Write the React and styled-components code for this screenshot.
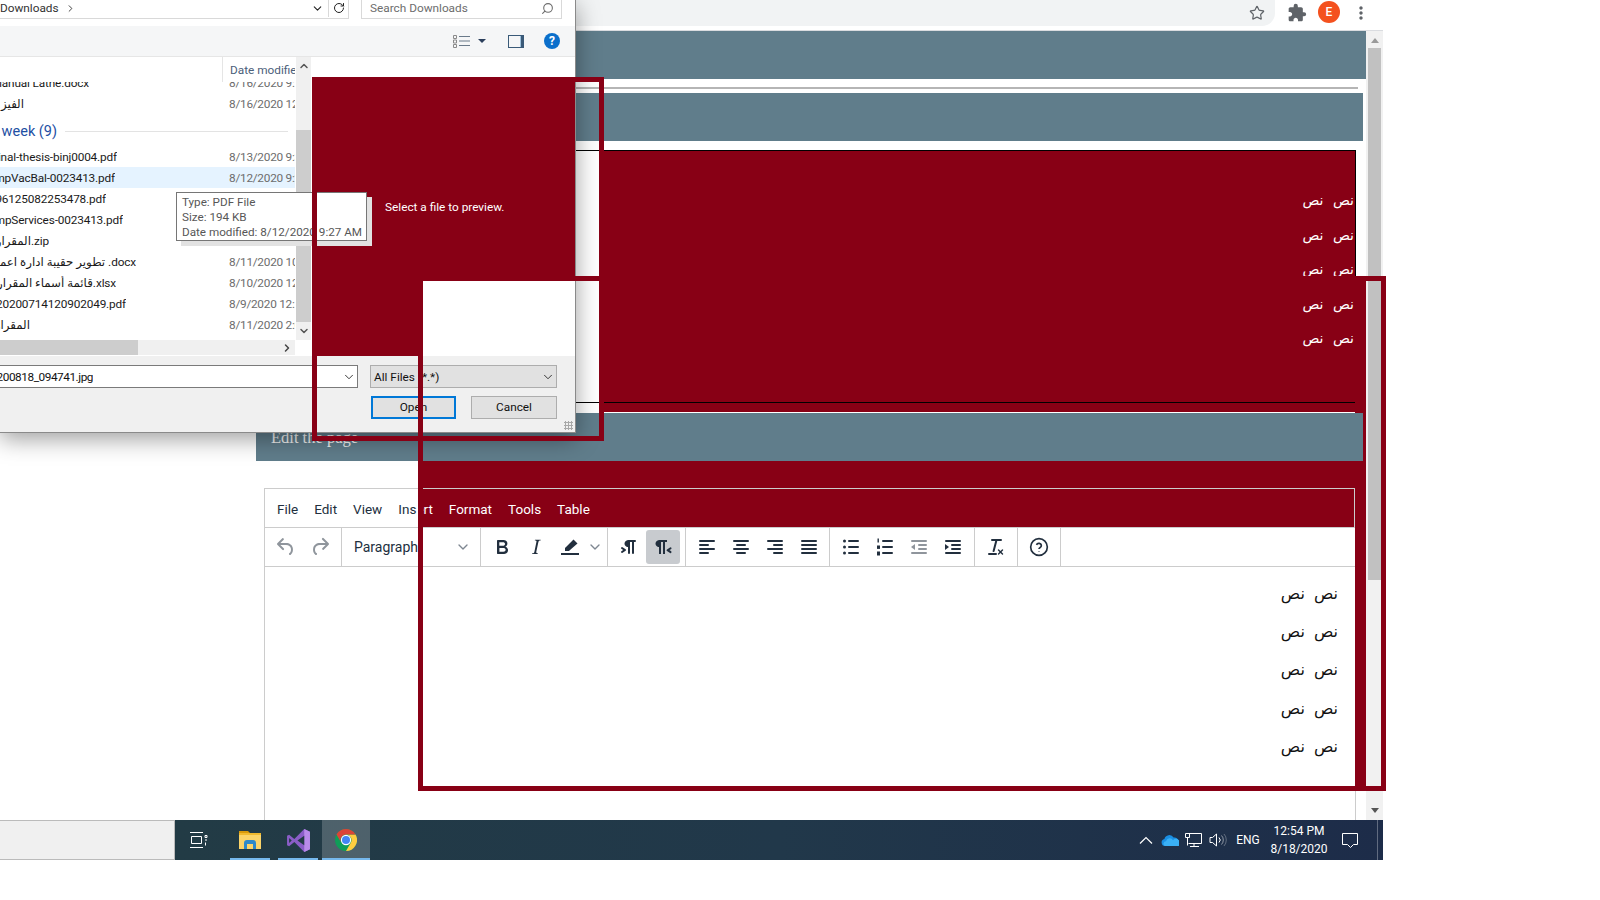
import React from "react";
import styled, { createGlobalStyle } from "styled-components";
import { ChevronDown, ChevronUp, ChevronRight, RotateCw, Search, Star } from "lucide-react";
import { MdExtension, MdMoreVert } from "react-icons/md";

const RED = "#880015";
const TEAL = "#607d8b";
const INK = "#222f3e";
const ARABIC = `"DejaVu Sans", sans-serif`;
const UI = `Roboto, "DejaVu Sans", sans-serif`;

const files = [
  { name: "Manual Lathe.docx", end: 89, date: "8/16/2020 9:12 AM", first: true },
  { name: "الفيز", end: 24, date: "8/16/2020 12:40 PM" },
  { group: "Last week (9)" },
  { name: "Final-thesis-binj0004.pdf", end: 117, date: "8/13/2020 9:30 AM" },
  { name: "EmpVacBal-0023413.pdf", end: 115, date: "8/12/2020 9:27 AM", selected: true },
  { name: "1596125082253478.pdf", end: 106, date: "8/12/2020 9:20 AM" },
  { name: "EmpServices-0023413.pdf", end: 123, date: "8/12/2020 9:18 AM" },
  { name: "المقرار.zip", end: 49, date: "8/11/2020 2:10 PM" },
  { name: "تطوير حقيبة ادارة اعمال .docx", end: 136, date: "8/11/2020 10:02 AM" },
  { name: "قائمة أسماء المقرارات.xlsx", end: 116, date: "8/10/2020 12:15 PM" },
  { name: "2020020200714120902049.pdf", end: 126, date: "8/9/2020 12:11 PM" },
  { name: "المقرار", end: 30, date: "8/11/2020 2:04 PM" }
];

const GlobalStyle = createGlobalStyle`
  html, body {
    margin: 0;
    padding: 0;
    background: #fff;
  }
  * {
    box-sizing: border-box;
  }
`;

const Page = styled.div`
  position: relative;
  width: 1600px;
  height: 900px;
  overflow: hidden;
  background: #fff;
  font-family: ${UI};
`;

const Screen = styled.div`
  width: 1383px;
  height: 860px;
  display: flex;
  flex-direction: column;
`;

const BrowserBar = styled.div`
  height: 31px;
  flex: none;
  display: flex;
  border-bottom: 1px solid #dadce0;
  color: #5f6368;
`;

const AddressBar = styled.div`
  width: 1275px;
  height: 26px;
  display: flex;
  align-items: center;
  justify-content: flex-end;
  padding-right: 10px;
  background: #f1f3f4;
  border-radius: 0 0 13px 0;
`;

const BarIcon = styled.div`
  height: 26px;
  display: flex;
  align-items: center;
  margin-left: ${p => p.$left}px;
`;

const Avatar = styled.div`
  width: 22px;
  height: 22px;
  margin: 1px 0 0 11px;
  border-radius: 50%;
  background: #f4511e;
  color: #fff;
  font-size: 12px;
  font-weight: 500;
  display: flex;
  align-items: center;
  justify-content: center;
`;

const Viewport = styled.div`
  flex: 1;
  min-height: 0;
  display: flex;
`;

const Content = styled.div`
  width: 1366px;
  padding-left: 256px;
  display: flex;
  flex-direction: column;
`;

const Banner = styled.div`
  width: ${p => p.$width}px;
  height: 48px;
  flex: none;
  margin-top: ${p => p.$top}px;
  background: ${TEAL};
`;

const EditBanner = styled(Banner)`
  position: relative;
  z-index: 2;
  padding: 15px 0 0 15px;
  color: #f2f2f2;
  font: 16.5px/20px "Liberation Serif", serif;
`;

const Rule = styled.div`
  width: 1102px;
  height: 2px;
  flex: none;
  margin-top: 8px;
  background: #b5b5b5;
`;

const PostTable = styled.div`
  width: 1100px;
  height: 253px;
  flex: none;
  margin-top: 9px;
  display: flex;
  justify-content: flex-end;
  border: 1px solid #000;
`;

const PostFill = styled.div`
  width: 751px;
  padding: 32px 1px 0 0;
  background: ${RED};
`;

const PostLine = styled.div`
  height: 34.5px;
  line-height: 34.5px;
  direction: rtl;
  color: #fff;
  font-family: ${ARABIC};
  font-size: 14px;
  word-spacing: 5px;
`;

const Editor = styled.div`
  width: 1092px;
  flex: 1;
  min-height: 0;
  margin: 27px 0 0 8px;
  display: flex;
  flex-direction: column;
  border: 1px solid #ccc;
  border-bottom: 0;
`;

const MenuBar = styled.div`
  position: relative;
  z-index: 2;
  height: 38px;
  flex: none;
  display: flex;
  align-items: center;
  padding: 2px 0 0 4px;
  font-size: 13.5px;
  color: ${INK};
`;

const MenuItem = styled.span`
  padding: 0 8px;
  color: ${p => (p.$light ? "#fff" : INK)};
`;

const LightPart = styled.span`
  color: #fff;
`;

const ToolBar = styled.div`
  height: 40px;
  flex: none;
  display: flex;
  border-top: 1px solid #ccc;
  border-bottom: 1px solid #ccc;
`;

const ToolGroup = styled.div`
  width: ${p => p.$width}px;
  flex: none;
  display: flex;
  align-items: center;
  padding: 0 4px;
  border-right: 1px solid #ccc;
`;

const ParagraphGroup = styled(ToolGroup)`
  justify-content: space-between;
  padding: 0 9px 0 12px;
  color: ${INK};
  font-size: 14px;
`;

const ToolButton = styled.div`
  width: 34px;
  height: 34px;
  flex: none;
  display: flex;
  align-items: center;
  justify-content: center;
  border-radius: 3px;
  background: ${p => (p.$active ? "#c8cbcf" : "transparent")};
  color: ${p => (p.$muted ? "#8f959c" : INK)};
`;

const SplitChevron = styled.div`
  width: 18px;
  display: flex;
  justify-content: center;
  color: #7e8791;
`;

const EditorBody = styled.div`
  flex: 1;
  padding: 16px 17px 0 0;
  direction: rtl;
  font-family: ${ARABIC};
  font-size: 16px;
  word-spacing: 4px;
  color: #111;
`;

const EditorLine = styled.p`
  height: 22px;
  margin: 0 0 16.2px;
  line-height: 22px;
`;

const PageScroll = styled.div`
  width: 17px;
  display: flex;
  flex-direction: column;
  align-items: center;
  background: #f1f1f1;
  color: #8a8a8a;
`;

const ScrollArrow = styled.div`
  width: 0;
  height: 0;
  flex: none;
  margin: ${p => (p.$down ? "auto 0 7px" : "7px 0 5px")};
  border-left: 4px solid transparent;
  border-right: 4px solid transparent;
  border-bottom: ${p => (p.$down ? "0" : "5px solid #9a9a9a")};
  border-top: ${p => (p.$down ? "5px solid #555" : "0")};
`;

const PageThumb = styled.div`
  width: 13px;
  height: 532px;
  flex: none;
  background: #c1c1c1;
`;

const BottomRow = styled.div`
  height: 40px;
  flex: none;
  display: flex;
`;

const SidePanel = styled.div`
  width: 175px;
  flex: none;
  background: #f0f0f0;
  border: 1px solid #bbb;
  border-left: 0;
`;

const Taskbar = styled.div`
  flex: 1;
  display: flex;
  color: #fff;
  background: linear-gradient(90deg, #223b45 0%, #21384a 50%, #1d2c49 100%);
`;

const TaskButton = styled.div`
  position: relative;
  width: 48px;
  flex: none;
  margin-left: ${p => p.$left || 0}px;
  display: flex;
  align-items: center;
  justify-content: center;
  background: ${p => (p.$active ? "rgba(255,255,255,.2)" : "transparent")};

  &::after {
    content: "";
    display: ${p => (p.$line ? "block" : "none")};
    position: absolute;
    bottom: 0;
    left: ${p => (p.$active ? 0 : 4)}px;
    right: ${p => (p.$active ? 0 : 4)}px;
    height: 2px;
    background: #76b9ed;
  }
`;

const Tray = styled.div`
  margin-left: auto;
  display: flex;
  align-items: center;
  font-size: 12px;
`;

const TrayCell = styled.div`
  width: ${p => p.$width || 24}px;
  height: 40px;
  display: flex;
  flex-direction: column;
  align-items: center;
  justify-content: center;
  line-height: 18px;
  white-space: nowrap;
`;

const TrayEnd = styled.div`
  width: 15px;
  height: 40px;
  border-right: 5px solid transparent;
  box-shadow: inset -6px 0 0 -5px rgba(255, 255, 255, 0.3);
`;

const Dialog = styled.div`
  position: absolute;
  left: 0;
  top: 0;
  z-index: 3;
  width: 576px;
  height: 433px;
  display: flex;
  flex-direction: column;
  background: #fff;
  border-right: 1px solid #8a8a8a;
  border-bottom: 1px solid #8a8a8a;
  box-shadow: 0 6px 22px rgba(0, 0, 0, 0.38);
  font-size: 11.8px;
  color: #1a1a1a;
`;

const DialogTop = styled.div`
  height: 26px;
  flex: none;
  display: flex;
  color: #555;
`;

const PathBox = styled.div`
  width: 349px;
  height: 19px;
  flex: none;
  display: flex;
  align-items: center;
  padding-bottom: 2px;
  border: 1px solid #d9d9d9;
  border-width: 0 1px 1px 0;
  color: #222;
`;

const PathText = styled.span`
  flex: 1;
  display: flex;
  align-items: center;
  gap: 6px;
  color: #333;
`;

const PathAction = styled.span`
  width: ${p => p.$width}px;
  height: 18px;
  display: flex;
  align-items: center;
  justify-content: center;
  border-left: ${p => (p.$line ? "1px solid #d9d9d9" : "0")};
`;

const SearchBox = styled.div`
  width: 201px;
  height: 19px;
  margin-left: 12px;
  padding: 0 7px 2px 8px;
  display: flex;
  align-items: center;
  justify-content: space-between;
  border: 1px solid #d9d9d9;
  border-top: 0;
  color: #6d6d6d;
`;

const MirrorIcon = styled.span`
  display: flex;
  transform: scaleX(-1);
`;

const DialogBar = styled.div`
  height: 31px;
  flex: none;
  display: flex;
  align-items: center;
  justify-content: flex-end;
  gap: 8px;
  padding-right: 15px;
  background: #f5f6f7;
  border-bottom: 1px solid #e6e6e6;
`;

const BarCaret = styled.span`
  width: 0;
  height: 0;
  margin: 0 14px 0 -1px;
  border-left: 4px solid transparent;
  border-right: 4px solid transparent;
  border-top: 4px solid #2b3f5c;
`;

const PaneIcon = styled.span`
  width: 16px;
  height: 13px;
  margin-right: 12px;
  border: 1px solid #3a5a78;
  border-right-width: 3px;
  background: #f5f6f7;
  box-shadow: inset -1px 0 0 #9fc1dc;
`;

const HelpIcon = styled.span`
  width: 16px;
  height: 16px;
  border-radius: 50%;
  background: #0b6fcb;
  color: #fff;
  font-size: 12px;
  font-weight: 700;
  line-height: 16px;
  text-align: center;
`;

const DialogBody = styled.div`
  height: 299px;
  flex: none;
  display: flex;
`;

const ListPane = styled.div`
  width: 311px;
  flex: none;
  display: flex;
  flex-wrap: wrap;
  align-content: flex-start;
`;

const ListMain = styled.div`
  width: 296px;
  height: 283px;
  display: flex;
  flex-direction: column;
`;

const ListHeader = styled.div`
  height: 25px;
  flex: none;
  display: flex;
  position: relative;
  z-index: 1;
  padding: 6px 0 0 222px;
  background: #fff;
  color: #4c607a;
`;

const HeaderCell = styled.span`
  height: 25px;
  width: 73px;
  margin-top: -6px;
  padding: 6px 0 0 7px;
  overflow: hidden;
  white-space: nowrap;
  border-left: 1px solid #e5e5e5;
`;

const ListRows = styled.div`
  flex: 1;
  min-height: 0;
  overflow: hidden;
`;

const FileRow = styled.div`
  height: 21px;
  width: 295px;
  display: flex;
  align-items: center;
  margin-top: ${p => (p.$first ? -10 : 0)}px;
  background: ${p => (p.$selected ? "#e5f3ff" : "transparent")};
`;

const NameCell = styled.div`
  width: 229px;
  flex: none;
`;

const Clipped = styled.span`
  width: ${p => p.$end}px;
  display: flex;
  justify-content: flex-end;
  overflow: hidden;
  white-space: nowrap;
  letter-spacing: ${p => p.$tight || 0}px;
`;

const DateCell = styled.span`
  flex: 1;
  overflow: hidden;
  white-space: nowrap;
  letter-spacing: -0.25px;
  color: #6d6d6d;
`;

const GroupRow = styled.div`
  height: 32px;
  width: 295px;
  display: flex;
  align-items: center;
  gap: 8px;
  padding-top: 2px;
  color: #1e4fa3;
  font-size: 14.5px;
`;

const GroupRule = styled.span`
  width: 223px;
  height: 1px;
  background: #e3e3e3;
`;

const ListScroll = styled.div`
  width: 15px;
  height: 283px;
  display: flex;
  flex-direction: column;
  align-items: center;
  background: #f0f0f0;
  color: #555;
`;

const ListThumb = styled.div`
  width: 15px;
  height: 192px;
  flex: none;
  margin-top: 56px;
  background: #cdcdcd;
`;

const ArrowCell = styled.div`
  height: ${p => p.$height}px;
  flex: none;
  display: flex;
  align-items: center;
  justify-content: center;
  padding-right: ${p => p.$inset || 0}px;
`;

const HScroll = styled.div`
  width: 295px;
  height: 15px;
  display: flex;
  justify-content: space-between;
  background: #f0f0f0;
  color: #444;
`;

const HThumb = styled.div`
  width: 138px;
  background: #cdcdcd;
`;

const Footer = styled.div`
  flex: 1;
  position: relative;
  display: flex;
  flex-direction: column;
  padding: 9px 18px 0 0;
  background: #f0f0f0;
`;

const FooterRow = styled.div`
  display: flex;
  justify-content: space-between;
`;

const ButtonRow = styled(FooterRow)`
  justify-content: flex-end;
  gap: 15px;
  margin-top: 8px;
`;

const FileInput = styled.div`
  width: 358px;
  height: 23px;
  display: flex;
  align-items: center;
  justify-content: space-between;
  padding: 1px 1px 0 0;
  background: #fff;
  border: 1px solid #7a7a7a;
  border-left: 0;
  color: #111;
`;

const TypeSelect = styled.div`
  width: 187px;
  height: 23px;
  display: flex;
  align-items: center;
  justify-content: space-between;
  padding: 0 1px 0 3px;
  background: #e1e1e1;
  border: 1px solid #adadad;
  color: #111;
`;

const DialogButton = styled.div`
  width: ${p => p.$width}px;
  height: 23px;
  display: flex;
  align-items: center;
  justify-content: center;
  padding-bottom: 1px;
  background: #e1e1e1;
  border: ${p => (p.$primary ? "2px solid #0078d7" : "1px solid #adadad")};
  color: #111;
`;

const Grip = styled.div`
  position: absolute;
  right: 2px;
  bottom: 2px;
  width: 9px;
  height: 9px;
  background: radial-gradient(circle, #a8a8a8 1px, transparent 1.2px) 0 0 / 3px 3px;
`;

const Tooltip = styled.div`
  position: absolute;
  left: 176px;
  top: 192px;
  z-index: 5;
  width: 191px;
  height: 49px;
  padding: 2px 0 0 5px;
  background: #fff;
  border: 1px solid #767676;
  box-shadow: 5px 5px 0 #e2e2e2;
  color: #575757;
  font-size: 11.7px;
  line-height: 15px;
  white-space: nowrap;
`;

const DialogFill = styled.div`
  position: absolute;
  left: 312px;
  top: 77px;
  z-index: 4;
  width: 263px;
  height: 279px;
  padding: 122px 0 0 73px;
  background: ${RED};
  color: #fff;
  font-size: 11.8px;
  line-height: 16px;
`;

const WhitePatch = styled.div`
  position: absolute;
  left: 423px;
  top: 281px;
  z-index: 5;
  width: 152px;
  height: 75px;
  background: #fff;
`;

const Frame = styled.div`
  position: absolute;
  left: ${p => p.$x}px;
  top: ${p => p.$y}px;
  z-index: 6;
  width: ${p => p.$w}px;
  height: ${p => p.$h}px;
  border: 5px solid ${RED};
  pointer-events: none;
`;

const GapFill = styled.div`
  position: absolute;
  left: 604px;
  top: 403px;
  z-index: 1;
  width: 751px;
  height: 9px;
  background: ${RED};
`;

const SideStrip = styled.div`
  position: absolute;
  left: 1355px;
  top: 281px;
  z-index: 1;
  width: 11px;
  height: 506px;
  background: ${RED};
`;

const MenuBand = styled.div`
  position: absolute;
  left: 423px;
  top: 461px;
  z-index: 1;
  width: 932px;
  height: 66px;
  background: ${RED};

  &::after {
    content: "";
    position: absolute;
    left: 0;
    right: 0;
    top: 27px;
    bottom: 0;
    border-top: 1px solid #ccc;
    border-right: 1px solid #ccc;
  }
`;

const Icon = ({ children, size = 24, color = "currentColor" }) => (
  <svg width={size} height={size} viewBox="0 0 24 24" fill={color}>
    {children}
  </svg>
);

const Bars = ({ rows }) => (
  <Icon>
    {rows.map(([x, y, w]) => (
      <rect key={`${x}-${y}`} x={x} y={y} width={w} height="2" rx="1" />
    ))}
  </Icon>
);

const Bullets = () => (
  <Icon>
    <circle cx="5.5" cy="6" r="1.5" />
    <circle cx="5.5" cy="12" r="1.5" />
    <circle cx="5.5" cy="18" r="1.5" />
    <rect x="9" y="5" width="11" height="2" rx="1" />
    <rect x="9" y="11" width="11" height="2" rx="1" />
    <rect x="9" y="17" width="11" height="2" rx="1" />
  </Icon>
);

const Numbered = () => (
  <Icon>
    <rect x="4.5" y="3.5" width="1.4" height="4" />
    <rect x="4" y="10.5" width="3" height="3.4" />
    <rect x="4" y="16.5" width="3" height="4" />
    <rect x="9" y="5" width="11" height="2" rx="1" />
    <rect x="9" y="11" width="11" height="2" rx="1" />
    <rect x="9" y="17" width="11" height="2" rx="1" />
  </Icon>
);

const Outdent = () => (
  <Icon>
    <rect x="4" y="5" width="16" height="2" rx="1" />
    <rect x="11" y="9" width="9" height="2" rx="1" />
    <rect x="11" y="13" width="9" height="2" rx="1" />
    <rect x="4" y="17" width="16" height="2" rx="1" />
    <path d="M8 9v6l-4-3z" />
  </Icon>
);

const Indent = () => (
  <Icon>
    <rect x="4" y="5" width="16" height="2" rx="1" />
    <rect x="10" y="9" width="10" height="2" rx="1" />
    <rect x="10" y="13" width="10" height="2" rx="1" />
    <rect x="4" y="17" width="16" height="2" rx="1" />
    <path d="M4 9v6l4-3z" />
  </Icon>
);

const FolderLogo = () => (
  <svg width="22" height="20" viewBox="0 0 22 20">
    <path d="M0 1h9l2 2H0z" fill="#d99a0a" />
    <path d="M0 3h22v16H0z" fill="#fbd469" />
    <path d="M5 19v-6a3 3 0 0 1 3-3h6a3 3 0 0 1 3 3v6h-3v-5H8v5z" fill="#2d89c9" />
    <path d="M0 3h22v2H0z" fill="#f0b92e" />
  </svg>
);

const StudioLogo = () => (
  <svg width="25" height="25" viewBox="0 0 24 24">
    <path d="M17.5 1 23 3.5v17L17.5 23 8 13.5 3 17.5 1 16.5v-9l2-1 5 4z" fill="#8a5dc7" />
    <path d="M17.5 1 23 3.5v17L17.5 23z" fill="#b98bea" />
    <path d="M17.5 7.5 11 12l6.5 4.5z" fill="#223b45" />
    <path d="M3 9.5v5l2.5-2.5z" fill="#223b45" />
  </svg>
);

const ChromeLogo = () => (
  <svg width="22" height="22" viewBox="0 0 24 24">
    <circle cx="12" cy="12" r="12" fill="#0f9d58" />
    <path d="M22.4 6H12a6 6 0 0 1 5.2 9L12 24A12 12 0 0 0 22.4 6z" fill="#ffcd40" />
    <path d="M12 0A12 12 0 0 0 1.6 6l5.2 9A6 6 0 0 1 12 6h10.4A12 12 0 0 0 12 0z" fill="#db4437" />
    <circle cx="12" cy="12" r="5.6" fill="#fff" />
    <circle cx="12" cy="12" r="4.4" fill="#4285f4" />
  </svg>
);

const Paragraphs = () =>
  [0, 1, 2, 3, 4].map(i => <EditorLine key={i}>نص نص</EditorLine>);

export default function App() {
  return (
    <Page>
      <GlobalStyle />
      <Screen>
        <BrowserBar>
          <AddressBar>
            <Star size={16} strokeWidth={1.8} />
          </AddressBar>
          <BarIcon $left={12}>
            <MdExtension size={20} />
          </BarIcon>
          <Avatar>E</Avatar>
          <BarIcon $left={11}>
            <MdMoreVert size={20} />
          </BarIcon>
        </BrowserBar>

        <Viewport>
          <Content>
            <Banner $width={1110} $top={0} />
            <Rule />
            <Banner $width={1107} $top={4} />
            <PostTable>
              <PostFill>
                {[0, 1, 2, 3, 4].map(i => (
                  <PostLine key={i}>نص نص</PostLine>
                ))}
              </PostFill>
            </PostTable>
            <EditBanner $width={1107} $top={10}>
              Edit the page
            </EditBanner>
            <Editor>
              <MenuBar>
                <MenuItem>File</MenuItem>
                <MenuItem>Edit</MenuItem>
                <MenuItem>View</MenuItem>
                <MenuItem>
                  Ins<LightPart>ert</LightPart>
                </MenuItem>
                <MenuItem $light>Format</MenuItem>
                <MenuItem $light>Tools</MenuItem>
                <MenuItem $light>Table</MenuItem>
              </MenuBar>
              <ToolBar>
                <ToolGroup $width={77}>
                  <ToolButton $muted>
                    <Icon>
                      <path d="M6.4 8H12c3.7 0 6.2 2 6.8 5.1.6 2.7-.4 5.6-2.3 6.8a1 1 0 0 1-1-1.8c1.1-.6 1.8-2.7 1.4-4.6-.5-2.1-2.1-3.5-4.9-3.5H6.4l3.3 3.3a1 1 0 1 1-1.4 1.4l-5-5a1 1 0 0 1 0-1.4l5-5a1 1 0 0 1 1.4 1.4L6.4 8Z" />
                    </Icon>
                  </ToolButton>
                  <ToolButton $muted>
                    <Icon>
                      <path d="M17.6 10H12c-2.8 0-4.4 1.4-4.9 3.5-.4 2 .3 4 1.4 4.6a1 1 0 1 1-1 1.8c-2-1.2-2.9-4.1-2.3-6.8.6-3 3-5.1 6.8-5.1h5.6l-3.3-3.3a1 1 0 1 1 1.4-1.4l5 5a1 1 0 0 1 0 1.4l-5 5a1 1 0 0 1-1.4-1.4l3.3-3.3Z" />
                    </Icon>
                  </ToolButton>
                </ToolGroup>
                <ParagraphGroup $width={139}>
                  Paragraph
                  <ChevronDown size={16} color="#7e8791" />
                </ParagraphGroup>
                <ToolGroup $width={127}>
                  <ToolButton>
                    <Icon>
                      <path d="M7.8 19c-.3 0-.5 0-.6-.2l-.2-.5V5.7c0-.2 0-.4.2-.5l.6-.2h5c1.5 0 2.7.3 3.5 1 .7.6 1.1 1.4 1.1 2.5a3 3 0 0 1-.6 1.9c-.4.6-1 1-1.6 1.2.4.1.9.3 1.3.6s.8.7 1 1.2c.4.4.5 1 .5 1.6 0 1.3-.4 2.3-1.3 3-.8.7-2.1 1-3.8 1H7.8Zm5-8.3c.6 0 1.2-.1 1.6-.5.4-.3.6-.7.6-1.3 0-1.1-.8-1.7-2.3-1.7H9.3v3.5h3.4Zm.5 6c.7 0 1.3-.1 1.7-.4.4-.4.6-.9.6-1.5s-.2-1-.7-1.4c-.4-.3-1-.4-2-.4H9.4v3.8h4Z" />
                    </Icon>
                  </ToolButton>
                  <ToolButton>
                    <Icon>
                      <path d="M16.7 4.7l-.1.9h-.3c-.6 0-1 0-1.4.3-.3.3-.4.6-.5 1.1l-2.1 9.8v.6c0 .5.4.8 1.4.8h.2l-.2.8H8l.2-.8h.2c1.1 0 1.8-.5 2-1.5l2-9.8.1-.5c0-.6-.4-.8-1.4-.8h-.3l.2-.9h5.8Z" />
                    </Icon>
                  </ToolButton>
                  <ToolButton>
                    <Icon>
                      <path d="M3 18h18v2H3z" />
                      <path d="M15.5 4.5 19.5 8.5 12 15l-1 1H7v-3l1-1z" />
                    </Icon>
                  </ToolButton>
                  <SplitChevron>
                    <ChevronDown size={16} />
                  </SplitChevron>
                </ToolGroup>
                <ToolGroup $width={78}>
                  <ToolButton>
                    <Icon>
                      <path d="M11 5h7a1 1 0 0 1 0 2h-1v11a1 1 0 0 1-2 0V7h-2v11a1 1 0 0 1-2 0v-6c-.5 0-1 0-1.4-.3A3.4 3.4 0 0 1 7.8 10a3.3 3.3 0 0 1 0-2.8 3.4 3.4 0 0 1 1.8-1.8L11 5ZM4.4 16.2 6.2 15l-1.8-1.2a1 1 0 0 1 1.2-1.6l3 2a1 1 0 0 1 0 1.6l-3 2a1 1 0 1 1-1.2-1.6Z" />
                    </Icon>
                  </ToolButton>
                  <ToolButton $active>
                    <Icon>
                      <path d="M8 5h8v2h-2v12h-2V7h-2v12H8v-7c-.5 0-1 0-1.4-.3A3.4 3.4 0 0 1 4.8 10a3.3 3.3 0 0 1 0-2.8 3.4 3.4 0 0 1 1.8-1.8L8 5Zm12 11.2a1 1 0 1 1-1 1.8l-3-2a1 1 0 0 1 0-1.6l3-2a1 1 0 1 1 1 1.8L18.4 15l1.8 1.2Z" />
                    </Icon>
                  </ToolButton>
                </ToolGroup>
                <ToolGroup $width={144}>
                  <ToolButton>
                    <Bars rows={[[4, 5, 16], [4, 9, 10], [4, 13, 16], [4, 17, 10]]} />
                  </ToolButton>
                  <ToolButton>
                    <Bars rows={[[4, 5, 16], [7, 9, 10], [4, 13, 16], [7, 17, 10]]} />
                  </ToolButton>
                  <ToolButton>
                    <Bars rows={[[4, 5, 16], [10, 9, 10], [4, 13, 16], [10, 17, 10]]} />
                  </ToolButton>
                  <ToolButton>
                    <Bars rows={[[4, 5, 16], [4, 9, 16], [4, 13, 16], [4, 17, 16]]} />
                  </ToolButton>
                </ToolGroup>
                <ToolGroup $width={145}>
                  <ToolButton>
                    <Bullets />
                  </ToolButton>
                  <ToolButton>
                    <Numbered />
                  </ToolButton>
                  <ToolButton $muted>
                    <Outdent />
                  </ToolButton>
                  <ToolButton>
                    <Indent />
                  </ToolButton>
                </ToolGroup>
                <ToolGroup $width={43}>
                  <ToolButton>
                    <Icon>
                      <path d="M13.2 6a1 1 0 0 1 0 .2l-2.6 10a1 1 0 0 1-1 .8h-.2a.8.8 0 0 1-.8-1l2.6-10H8a1 1 0 1 1 0-2h9a1 1 0 0 1 0 2h-3.8ZM5 18h7a1 1 0 0 1 0 2H5a1 1 0 0 1 0-2Zm13 1.5L16.5 18 15 19.5a.7.7 0 0 1-1-1l1.5-1.5-1.5-1.5a.7.7 0 0 1 1-1l1.5 1.5 1.5-1.5a.7.7 0 0 1 1 1L17.5 17l1.5 1.5a.7.7 0 0 1-1 1Z" />
                    </Icon>
                  </ToolButton>
                </ToolGroup>
                <ToolGroup $width={43}>
                  <ToolButton>
                    <svg width="20" height="20" viewBox="0 0 24 24" fill="none" stroke={INK} strokeWidth="2">
                      <circle cx="12" cy="12" r="10" />
                      <path d="M9 9.5a3 3 0 0 1 5.8 1c0 2-2.8 2.5-2.8 4" />
                      <path d="M12 17.2v.6" />
                    </svg>
                  </ToolButton>
                </ToolGroup>
              </ToolBar>
              <EditorBody>
                <Paragraphs />
              </EditorBody>
            </Editor>
          </Content>
          <PageScroll>
            <ScrollArrow />
            <PageThumb />
            <ScrollArrow $down />
          </PageScroll>
        </Viewport>

        <BottomRow>
          <SidePanel />
          <Taskbar>
            <TaskButton>
              <svg width="18" height="16" viewBox="0 0 18 16" fill="none" stroke="#fff" strokeWidth="1">
                <path d="M0 .5h13M0 15.5h13M1.5 4.5h10v7h-10zM15 3.5h2v2h-2zM15 8h2v0M15.5 10.5v3" />
              </svg>
            </TaskButton>
            <TaskButton $left={3} $line>
              <FolderLogo />
            </TaskButton>
            <TaskButton $line>
              <StudioLogo />
            </TaskButton>
            <TaskButton $line $active>
              <ChromeLogo />
            </TaskButton>
            <Tray>
              <TrayCell>
                <svg width="14" height="8" viewBox="0 0 14 8" fill="none" stroke="#fff" strokeWidth="1.2">
                  <path d="M1 7.5 7 1.5l6 6" />
                </svg>
              </TrayCell>
              <TrayCell>
                <svg width="18" height="12" viewBox="0 0 18 12">
                  <path d="M4 12a3.6 3.6 0 0 1-.6-7.1A5 5 0 0 1 12.6 3.6 4.2 4.2 0 0 1 14.5 12z" fill="#1a8fe3" />
                  <path d="M4 12a2.5 2.5 0 0 1 1-4.8 3.8 3.8 0 0 1 7-1 4 4 0 0 1 5.8 5.8z" fill="#3ab0f5" />
                </svg>
              </TrayCell>
              <TrayCell>
                <svg width="18" height="16" viewBox="0 0 18 16" fill="none" stroke="#fff" strokeWidth="1">
                  <path d="M3.5 1.5h13v10h-13M.5 1.5h4v4h-4zM2.5 5.5v8M9 11.5v3M5 14.5h9" />
                </svg>
              </TrayCell>
              <TrayCell>
                <svg width="18" height="16" viewBox="0 0 18 16" fill="none" stroke="#fff" strokeWidth="1">
                  <path d="M1 5.5h2.5L7.5 2v12l-4-3.5H1z" />
                  <path d="M10 5.5a3.5 3.5 0 0 1 0 5" />
                  <path d="M12.5 3.5a6.5 6.5 0 0 1 0 9" opacity="0.5" />
                  <path d="M15 2a9 9 0 0 1 0 12" opacity="0.3" />
                </svg>
              </TrayCell>
              <TrayCell $width={36}>ENG</TrayCell>
              <TrayCell $width={66}>
                <span>12:54 PM</span>
                <span>8/18/2020</span>
              </TrayCell>
              <TrayCell $width={36}>
                <svg width="18" height="18" viewBox="0 0 18 18" fill="none" stroke="#fff" strokeWidth="1">
                  <path d="M1.5 2.5h15v11h-4l-3 3-3-3h-5z" />
                </svg>
              </TrayCell>
              <TrayEnd />
            </Tray>
          </Taskbar>
        </BottomRow>
      </Screen>

      <GapFill />
      <SideStrip />
      <MenuBand />

      <Dialog>
        <DialogTop>
          <PathBox>
            <PathText>
              Downloads
              <ChevronRight size={11} />
            </PathText>
            <PathAction $width={21}>
              <ChevronDown size={13} />
            </PathAction>
            <PathAction $width={20} $line>
              <RotateCw size={12} />
            </PathAction>
          </PathBox>
          <SearchBox>
            Search Downloads
            <MirrorIcon>
              <Search size={13} />
            </MirrorIcon>
          </SearchBox>
        </DialogTop>
        <DialogBar>
          <svg width="18" height="13" viewBox="0 0 18 13" fill="none">
            <path d="M.5.5h3v3h-3zM.5 5h3v3h-3zM.5 9.5h3v3h-3z" stroke="#8a8a8a" />
            <path d="M6 1.5h11M6 6h11M6 10.5h11" stroke="#6a7a8a" />
          </svg>
          <BarCaret />
          <PaneIcon />
          <HelpIcon>?</HelpIcon>
        </DialogBar>
        <DialogBody>
          <ListPane>
            <ListMain>
              <ListHeader>
                <HeaderCell>Date modified</HeaderCell>
              </ListHeader>
              <ListRows>
                {files.map(file =>
                  file.group ? (
                    <GroupRow key={file.group}>
                      <Clipped $end={57}>{file.group}</Clipped>
                      <GroupRule />
                    </GroupRow>
                  ) : (
                    <FileRow key={file.name} $first={file.first} $selected={file.selected}>
                      <NameCell>
                        <Clipped $end={file.end} $tight={-0.15}>{file.name}</Clipped>
                      </NameCell>
                      <DateCell>{file.date}</DateCell>
                    </FileRow>
                  )
                )}
              </ListRows>
            </ListMain>
            <ListScroll>
              <ArrowCell $height={17}>
                <ChevronUp size={12} strokeWidth={3} />
              </ArrowCell>
              <ListThumb />
              <ArrowCell $height={18}>
                <ChevronDown size={12} strokeWidth={3} />
              </ArrowCell>
            </ListScroll>
            <HScroll>
              <HThumb />
              <ArrowCell $height={15} $inset={2}>
                <ChevronRight size={12} strokeWidth={3} />
              </ArrowCell>
            </HScroll>
          </ListPane>
        </DialogBody>
        <Footer>
          <FooterRow>
            <FileInput>
              <Clipped $end={93} $tight={-0.45}>20200818_094741.jpg</Clipped>
              <ChevronDown size={14} strokeWidth={1.4} />
            </FileInput>
            <TypeSelect>
              All Files (*.*)
              <ChevronDown size={14} strokeWidth={1.4} />
            </TypeSelect>
          </FooterRow>
          <ButtonRow>
            <DialogButton $width={85} $primary>
              Open
            </DialogButton>
            <DialogButton $width={86}>Cancel</DialogButton>
          </ButtonRow>
          <Grip />
        </Footer>
      </Dialog>

      <DialogFill>Select a file to preview.</DialogFill>
      <WhitePatch />
      <Tooltip>
        Type: PDF File
        <br />
        Size: 194 KB
        <br />
        Date modified: 8/12/2020 9:27 AM
      </Tooltip>
      <Frame $x={312} $y={77} $w={292} $h={364} />
      <Frame $x={418} $y={276} $w={968} $h={515} />
    </Page>
  );
}
